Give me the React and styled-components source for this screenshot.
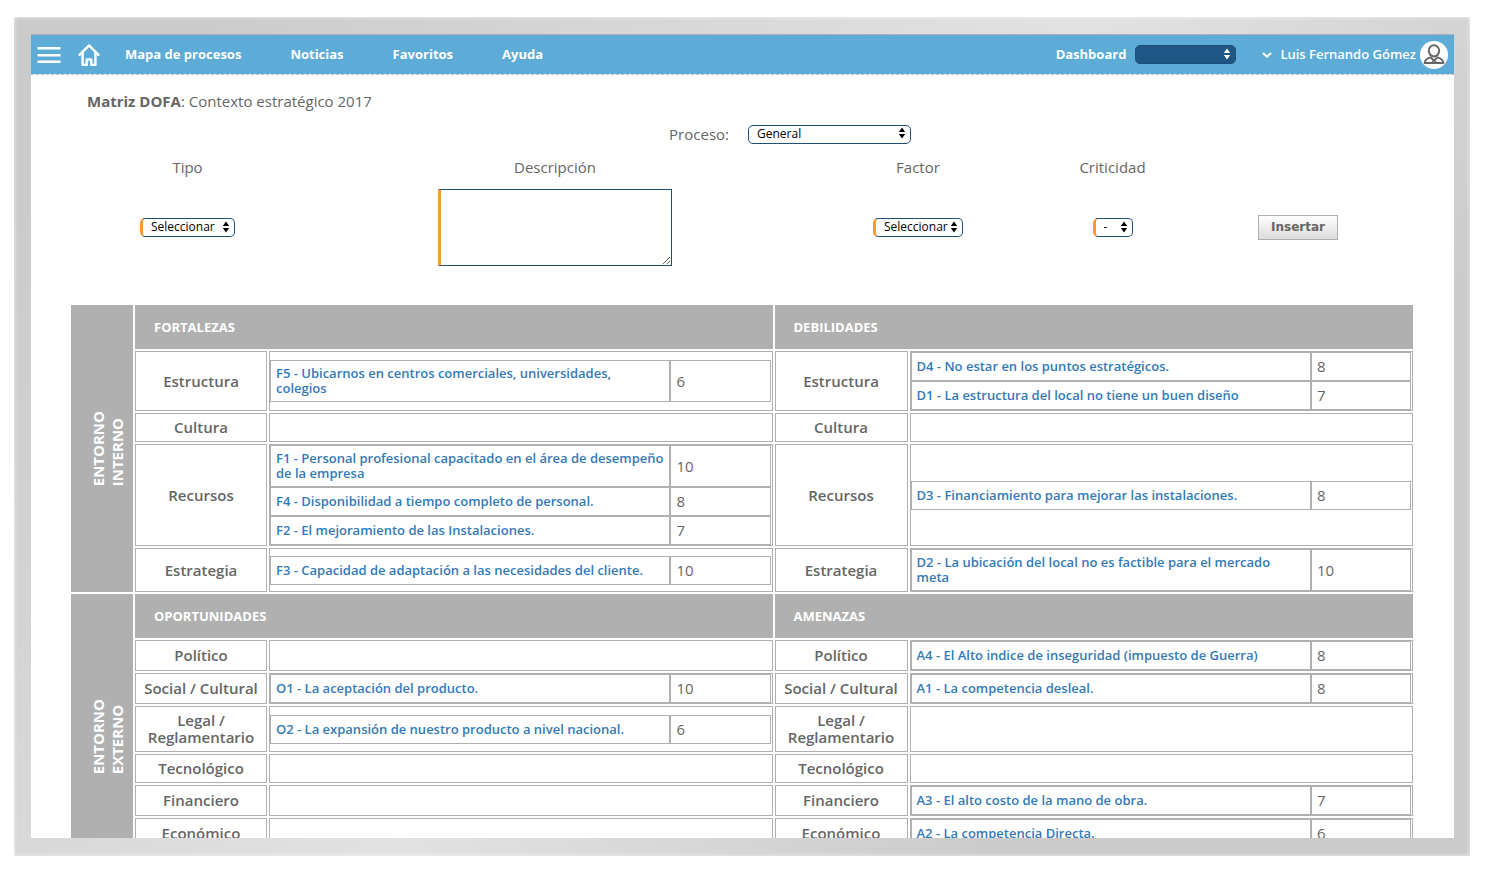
import { Fragment } from "react"
import styled, { createGlobalStyle } from "styled-components"

const navLinks = ["Mapa de procesos", "Noticias", "Favoritos", "Ayuda"]

const sections = [
    {
        side: ["ENTORNO", "INTERNO"],
        left: "FORTALEZAS",
        right: "DEBILIDADES",
        rows: [
            {
                name: "Estructura",
                left: [["F5 - Ubicarnos en centros comerciales, universidades, colegios", 6]],
                right: [
                    ["D4 - No estar en los puntos estratégicos.", 8],
                    ["D1 - La estructura del local no tiene un buen diseño", 7],
                ],
            },
            { name: "Cultura", left: [], right: [] },
            {
                name: "Recursos",
                left: [
                    ["F1 - Personal profesional capacitado en el área de desempeño de la empresa", 10],
                    ["F4 - Disponibilidad a tiempo completo de personal.", 8],
                    ["F2 - El mejoramiento de las Instalaciones.", 7],
                ],
                right: [["D3 - Financiamiento para mejorar las instalaciones.", 8]],
            },
            {
                name: "Estrategia",
                left: [["F3 - Capacidad de adaptación a las necesidades del cliente.", 10]],
                right: [["D2 - La ubicación del local no es factible para el mercado meta", 10]],
            },
        ],
    },
    {
        side: ["ENTORNO", "EXTERNO"],
        left: "OPORTUNIDADES",
        right: "AMENAZAS",
        rows: [
            {
                name: "Político",
                left: [],
                right: [["A4 - El Alto indice de inseguridad (impuesto de Guerra)", 8]],
            },
            {
                name: "Social / Cultural",
                left: [["O1 - La aceptación del producto.", 10]],
                right: [["A1 - La competencia desleal.", 8]],
            },
            {
                name: "Legal / Reglamentario",
                left: [["O2 - La expansión de nuestro producto a nivel nacional.", 6]],
                right: [],
            },
            { name: "Tecnológico", left: [], right: [] },
            {
                name: "Financiero",
                left: [],
                right: [["A3 - El alto costo de la mano de obra.", 7]],
            },
            {
                name: "Económico",
                left: [],
                right: [["A2 - La competencia Directa.", 6]],
            },
            { name: "", left: [], right: [] },
        ],
    },
]

const Select = ({ id, label, options, width, variant }) => (
    <SelectBox $width={width}>
        <StyledSelect id={id} aria-label={label} $variant={variant}>
            {options.map((option) => (
                <option key={option}>{option}</option>
            ))}
        </StyledSelect>
        <Arrows viewBox="0 0 8 12" $light={variant === "dark"} aria-hidden="true">
            <path d="M4 0.5 L7.2 5 H0.8 Z M4 11.5 L7.2 7 H0.8 Z" />
        </Arrows>
    </SelectBox>
)

const Items = ({ items }) => {
    if (!items.length) return null

    return (
        <ItemTable>
            <tbody>
                {items.map(([text, value]) => (
                    <tr key={text}>
                        <ItemText>
                            <a href="#item">{text}</a>
                        </ItemText>
                        <ItemValue>{value}</ItemValue>
                    </tr>
                ))}
            </tbody>
        </ItemTable>
    )
}

const Matrix = () => (
    <MatrixTable>
        <colgroup>
            <SideCol />
            <NameCol $width={132} />
            <col />
            <NameCol $width={133} />
            <col />
        </colgroup>
        <tbody>
            {sections.map((section) => (
                <Fragment key={section.left}>
                    <tr>
                        <SideCell scope="rowgroup" rowSpan={section.rows.length + 1}>
                            <SideText>
                                {section.side[0]}
                                <br />
                                {section.side[1]}
                            </SideText>
                        </SideCell>
                        <HeadCell scope="colgroup" colSpan={2}>{section.left}</HeadCell>
                        <HeadCell scope="colgroup" colSpan={2}>{section.right}</HeadCell>
                    </tr>
                    {section.rows.map((row) => (
                        <tr key={row.name}>
                            <NameCell>{row.name || "\u00a0"}</NameCell>
                            <ContentCell>
                                <Items items={row.left} />
                            </ContentCell>
                            <NameCell>{row.name || "\u00a0"}</NameCell>
                            <ContentCell>
                                <Items items={row.right} />
                            </ContentCell>
                        </tr>
                    ))}
                </Fragment>
            ))}
        </tbody>
    </MatrixTable>
)

const App = () => (
    <Page>
        <GlobalStyle />
        <Frame>
            <Screen>
                <TopBar>
                    <IconButton type="button" aria-label="Menú">
                        <svg width="24" height="18" viewBox="0 0 24 18">
                            <path d="M0.5 2.2 H23.5 M0.5 9.2 H23.5 M0.5 15.8 H23.5" stroke="#fff" strokeWidth="2.4" />
                        </svg>
                    </IconButton>
                    <HomeLink href="#home" aria-label="Inicio">
                        <svg width="22" height="24" viewBox="0 0 22 24" fill="none" stroke="#fff" strokeWidth="2.5" strokeLinejoin="round" strokeLinecap="round">
                            <path d="M1.6 11.8 L11 2.4 L20.4 11.8" />
                            <path d="M4.6 10.6 V21.8 H8.8 V16.4 H13.2 V21.8 H17.4 V10.6" />
                        </svg>
                    </HomeLink>
                    <Nav>
                        {navLinks.map((link) => (
                            <NavLink key={link} href="#nav">{link}</NavLink>
                        ))}
                    </Nav>
                    <DashboardLabel htmlFor="dashboard">Dashboard</DashboardLabel>
                    <Select id="dashboard" options={[""]} width={101} variant="dark" />
                    <UserButton type="button">
                        <svg width="10" height="8" viewBox="0 0 10 8" fill="none" stroke="#fff" strokeWidth="2">
                            <path d="M1 2 L5 5.8 L9 2" />
                        </svg>
                        <UserName>Luis Fernando Gómez</UserName>
                        <Avatar>
                            <svg width="22" height="22" viewBox="0 0 22 22" fill="none" stroke="#666" strokeWidth="2">
                                <ellipse cx="11" cy="6.8" rx="5.2" ry="5.6" />
                                <path d="M7.6 13.4 Q2.4 14.6 1.6 19 H20.4 Q19.6 14.6 14.4 13.4 L11 16.4 Z" strokeLinejoin="round" />
                                <path d="M8.6 18.6 L11 16 L13.4 18.6" strokeWidth="1.4" />
                            </svg>
                        </Avatar>
                    </UserButton>
                </TopBar>

                <Main>
                    <Title>
                        <b>Matriz DOFA</b>: Contexto estratégico 2017
                    </Title>

                    <ProcessRow>
                        <ProcessLabel htmlFor="proceso">Proceso:</ProcessLabel>
                        <Select id="proceso" options={["General"]} width={163} />
                    </ProcessRow>

                    <Form onSubmit={(e) => e.preventDefault()}>
                        <Field>
                            <FieldLabel htmlFor="tipo">Tipo</FieldLabel>
                            <Control>
                                <Select id="tipo" options={["Seleccionar"]} width={95} variant="required" />
                            </Control>
                        </Field>
                        <Field>
                            <FieldLabel htmlFor="descripcion">Descripción</FieldLabel>
                            <Control>
                                <TextArea id="descripcion" />
                            </Control>
                        </Field>
                        <Field>
                            <FieldLabel htmlFor="factor">Factor</FieldLabel>
                            <Control>
                                <Select id="factor" options={["Seleccionar"]} width={90} variant="required" />
                            </Control>
                        </Field>
                        <Field>
                            <FieldLabel htmlFor="criticidad">Criticidad</FieldLabel>
                            <Control>
                                <Select id="criticidad" options={["-"]} width={40} variant="required" />
                            </Control>
                        </Field>
                        <Field>
                            <Control>
                                <InsertButton type="submit">Insertar</InsertButton>
                            </Control>
                        </Field>
                    </Form>

                    <MatrixWrapper>
                        <Matrix />
                    </MatrixWrapper>
                </Main>
            </Screen>
        </Frame>
    </Page>
)

export default App


const GlobalStyle = createGlobalStyle`
    * {
        box-sizing: border-box;
    }

    body {
        margin: 0;
        background: #fff;
        color: #666;
        font-family: "Trebuchet MS", "Open Sans", sans-serif;
        font-size: 15px;
    }

    button, select, textarea {
        font-family: inherit;
    }
`;

const Page = styled.div`
    display: flex;
    height: 100vh;
    padding: 17px 15px 16px 14px;
`;

const Frame = styled.div`
    display: flex;
    flex: 1;
    min-width: 0;
    padding: 17px 16px 18px 17px;
    background: linear-gradient(130deg, #cbcbcb 8%, #e2e2e2 50%, #cbcbcb 78%);
    box-shadow: inset 0 0 4px rgba(255, 255, 255, 0.7);
`;

const Screen = styled.div`
    flex: 1;
    min-width: 0;
    overflow-y: auto;
    scrollbar-width: none;
    background: #fff;
    border-top: 1px solid #b0b0b0;
`;

const TopBar = styled.header`
    display: flex;
    align-items: center;
    height: 40px;
    padding: 0 6px;
    background: #5cacd7;
    background-clip: padding-box;
    border-bottom: 1px dashed #c4c4c4;
    color: #fff;
    font-size: 13px;
    font-weight: 700;
`;

const IconButton = styled.button`
    display: flex;
    padding: 0;
    border: none;
    background: none;
    cursor: pointer;
`;

const HomeLink = styled.a`
    display: flex;
    margin-left: 17px;
`;

const Nav = styled.nav`
    display: flex;
    flex: 1;
    gap: 49px;
    margin-left: 25px;
    padding-bottom: 2px;
`;

const NavLink = styled.a`
    color: #fff;
    text-decoration: none;
    white-space: nowrap;
`;

const DashboardLabel = styled.label`
    margin-right: 9px;
    padding-bottom: 2px;
`;

const UserButton = styled.button`
    display: flex;
    align-items: center;
    gap: 8px;
    margin-left: 26px;
    padding: 0;
    border: none;
    background: none;
    color: #fff;
    font-size: 13px;
    font-weight: 600;
    white-space: nowrap;
    cursor: pointer;
`;

const UserName = styled.span`
    padding-bottom: 2px;
`;

const Avatar = styled.span`
    display: flex;
    align-items: center;
    justify-content: center;
    width: 28px;
    height: 28px;
    margin-left: -4px;
    border-radius: 50%;
    background: #fff;
`;

const SelectBox = styled.span`
    display: inline-grid;
    align-items: center;
    width: ${(p) => p.$width}px;
`;

const StyledSelect = styled.select`
    grid-area: 1 / 1;
    width: 100%;
    height: 19px;
    padding: 0 0 2px 8px;
    appearance: none;
    border: 1px solid #1f4e79;
    border-left: ${(p) => (p.$variant === "required" ? "3px solid #f49b33" : "1px solid #1f4e79")};
    border-radius: 5px;
    background: ${(p) => (p.$variant === "dark" ? "#1e5785" : "#fff")};
    color: #000;
    font-size: 12px;
    line-height: 15px;
`;

const Arrows = styled.svg`
    grid-area: 1 / 1;
    justify-self: end;
    width: 8px;
    height: 12px;
    margin: 0 5px 2px 0;
    fill: ${(p) => (p.$light ? "#fff" : "#000")};
    pointer-events: none;
`;

const Main = styled.main`
    display: flex;
    flex-direction: column;
    padding-top: 16px;
`;

const Title = styled.h1`
    margin: 0;
    padding: 0 56px;
    font-size: 15px;
    font-weight: 400;
    line-height: 20px;
`;

const ProcessRow = styled.div`
    display: grid;
    grid-template-columns: 1fr 1fr;
    align-items: center;
    gap: 19px;
    margin-top: 13px;
    padding-right: 8px;
`;

const ProcessLabel = styled.label`
    line-height: 20px;
    text-align: right;
`;

const Form = styled.form`
    display: grid;
    grid-template-columns: 233fr 502fr 224fr 165fr 206fr;
    margin-top: 13px;
    padding: 0 53px 0 40px;
`;

const Field = styled.div`
    display: flex;
    flex-direction: column;
    align-items: center;
    justify-content: flex-end;
    gap: 12px;
`;

const FieldLabel = styled.label`
    line-height: 20px;
`;

const Control = styled.div`
    display: flex;
    align-items: center;
    height: 77px;
`;

const TextArea = styled.textarea`
    width: 234px;
    height: 77px;
    padding: 4px;
    border: 1px solid #1f4e79;
    border-left: 3px solid #f49b33;
    outline: none;
    font-size: 12px;
`;

const InsertButton = styled.button`
    width: 80px;
    height: 25px;
    padding: 0 0 2px;
    border: 1px solid #b0b0b0;
    background: linear-gradient(#fff, #dcdcdc);
    color: #666;
    font-family: Verdana, "DejaVu Sans", sans-serif;
    font-size: 12px;
    font-weight: 700;
    cursor: pointer;
`;

const MatrixWrapper = styled.section`
    margin-top: 37px;
    padding: 0 39px 0 38px;
`;

const MatrixTable = styled.table`
    width: 100%;
    table-layout: fixed;
    border-spacing: 2px;
    line-height: 17px;

    td, th {
        padding: 0;
    }
`;

const SideCol = styled.col`
    width: 62px;
`;

const NameCol = styled.col`
    width: ${(p) => p.$width}px;
`;

const SideCell = styled.th`
    background: #b0b0b0;
    color: #fff;
`;

const SideText = styled.span`
    display: inline-block;
    margin-left: 12px;
    font-weight: 700;
    line-height: 19px;
    text-align: left;
    vertical-align: middle;
    writing-mode: vertical-rl;
    transform: rotate(180deg);
`;

const HeadCell = styled.th`
    height: 44px;
    background: #b0b0b0;
    color: #fff;
    font-size: 13px;
    text-align: left;
    text-indent: 19px;
`;

const NameCell = styled.td`
    border: 1px solid #b0b0b0;
    font-weight: 600;
    text-align: center;

    ${MatrixTable} & {
        padding: 5px;
    }
`;

const ContentCell = styled.td`
    border: 1px solid #b0b0b0;

    ${MatrixTable} & {
        padding-right: 1px;
    }
`;

const ItemTable = styled.table`
    width: 100%;
    table-layout: fixed;
    border-spacing: 0;
`;

const ItemText = styled.td`
    width: 80%;
    border: 1px solid #b0b0b0;
    font-size: 13px;
    font-weight: 600;
    line-height: 15px;

    ${MatrixTable} & {
        padding: 5px;
    }

    a {
        color: #337ab7;
        text-decoration: none;
    }
`;

const ItemValue = styled.td`
    border: 1px solid #b0b0b0;

    ${MatrixTable} & {
        padding: 5px;
    }
`;
